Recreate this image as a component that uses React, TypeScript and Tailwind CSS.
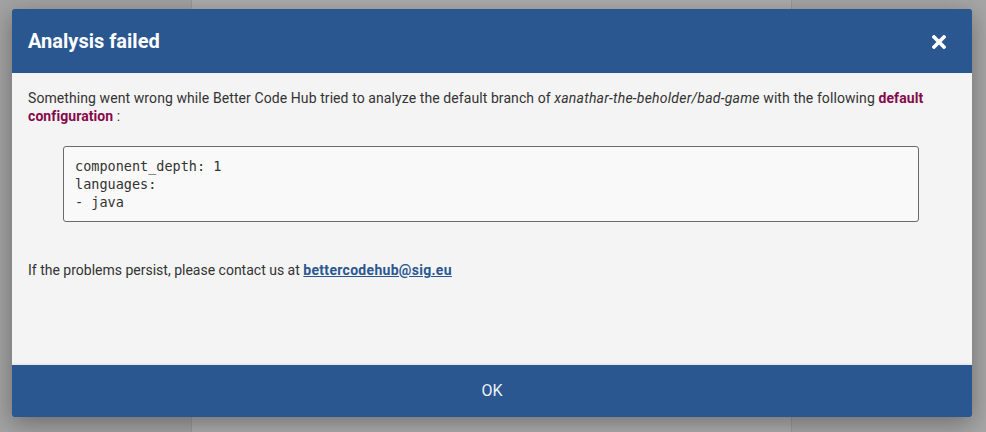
import React from "react";

export default function App() {
  return (
    <div className="relative w-[986px] h-[432px] overflow-hidden bg-[#a3a3a3]" style={{ fontFamily: "Roboto, 'Liberation Sans', sans-serif" }}>
      <div className="flex h-full">
        <div className="w-[192px] bg-[#a3a3a3] border-r border-[#999]" />
        <div className="w-[600px] bg-[#adadad] border-r border-[#9a9a9a]" />
        <div className="flex-1 bg-[#a6a6a6]" />
      </div>
      <div className="absolute left-[12px] top-[9px] w-[960px] h-[408px] flex flex-col rounded-[2px] overflow-hidden shadow-[0_6px_24px_rgba(0,0,0,0.35)] bg-[#f4f4f4]">
        <div className="h-[64px] shrink-0 bg-[#2a5790] flex items-center justify-between pl-[16px] pr-[26px]">
          <h1 className="text-white text-[20px] font-bold leading-none">Analysis failed</h1>
          <svg width="14" height="14" viewBox="0 0 14 14" className="mt-[2px]">
            <path d="M2 2 L12 12 M12 2 L2 12" stroke="white" strokeWidth="3.6" strokeLinecap="square" />
          </svg>
        </div>
        <div className="flex-1 pt-[16px] pl-[16px] pr-[28px] text-[14px] leading-[18px] text-[#333]">
          <p className="tracking-[0.085px]">
            Something went wrong while Better Code Hub tried to analyze the default branch of{" "}
            <em className="tracking-[0.23px]">xanathar-the-beholder/bad-game</em> with the following{" "}
            <strong className="text-[#850a4b]">default configuration</strong> :
          </p>
          <pre
            className="mt-[21px] ml-[35px] mr-[25px] border border-[#6a6a6a] rounded-[3px] bg-[#f9f9f9] pt-[10px] pb-[10px] px-[11px] text-[13.5px] leading-[18px] text-[#333] tracking-normal"
            style={{ fontFamily: "'DejaVu Sans Mono', monospace" }}
          >
{`component_depth: 1
languages:
- java`}
          </pre>
          <p className="mt-[39px]">
            If the problems persist, please contact us at{" "}
            <a className="font-bold text-[#2a5790] underline tracking-[0.3px]">bettercodehub@sig.eu</a>
          </p>
        </div>
        <div className="h-[52px] shrink-0 bg-[#2a5790] flex items-center justify-center shadow-[0_-1px_2px_rgba(0,0,0,0.08)]">
          <span className="text-[#eef2f8] text-[16px]">OK</span>
        </div>
      </div>
    </div>
  );
}
